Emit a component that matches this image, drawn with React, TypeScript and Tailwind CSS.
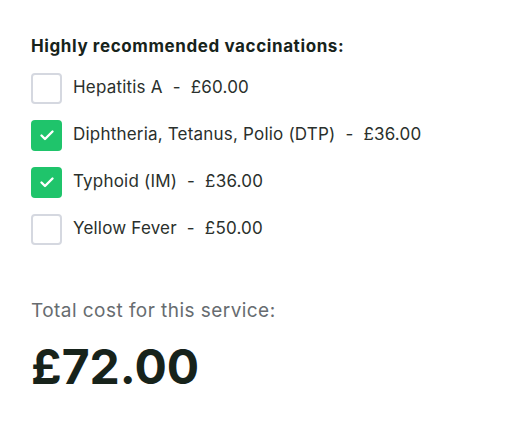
const ITEMS = [
  { name: 'Hepatitis A', price: '£60.00', checked: false },
  { name: 'Diphtheria, Tetanus, Polio (DTP)', price: '£36.00', checked: true },
  { name: 'Typhoid (IM)', price: '£36.00', checked: true },
  { name: 'Yellow Fever', price: '£50.00', checked: false },
]

export default function App() {
  return (
    <div className="w-[506px] h-[427px] bg-white px-[31px] pt-[36px] font-['Inter',sans-serif]">
      <h3 className="text-[17px] font-bold text-[#17231b] leading-[20px] tracking-[0.6px]">
        Highly recommended vaccinations:
      </h3>

      <ul className="mt-[16px] flex flex-col gap-[15px]">
        {ITEMS.map(it => (
          <li key={it.name} className="flex items-center gap-[11px] h-[32px]">
            {it.checked ? (
              <span className="w-[31px] h-[31px] rounded-[4px] bg-[#1fc46b] flex items-center justify-center">
                <svg width="16" height="16" viewBox="0 0 16 16" fill="none">
                  <path d="M2.5 8.5l3.5 3.5 7.5-7.5" stroke="white" strokeWidth="2.4" strokeLinecap="round" strokeLinejoin="round" />
                </svg>
              </span>
            ) : (
              <span className="w-[31px] h-[31px] rounded-[4px] border-2 border-[#d5d8e0] bg-white" />
            )}
            <span className="text-[17px] text-[#2a302c] whitespace-pre tracking-[0.2px]">
              {it.name}{'  -  '}{it.price}
            </span>
          </li>
        ))}
      </ul>

      <p className="mt-[54px] text-[19px] text-[#676c70] leading-[24px] tracking-[0.45px]">Total cost for this service:</p>
      <p className="mt-[17px] text-[48px] font-bold text-[#17231b] leading-[54px] tracking-[0px]">£72.00</p>
    </div>
  )
}
